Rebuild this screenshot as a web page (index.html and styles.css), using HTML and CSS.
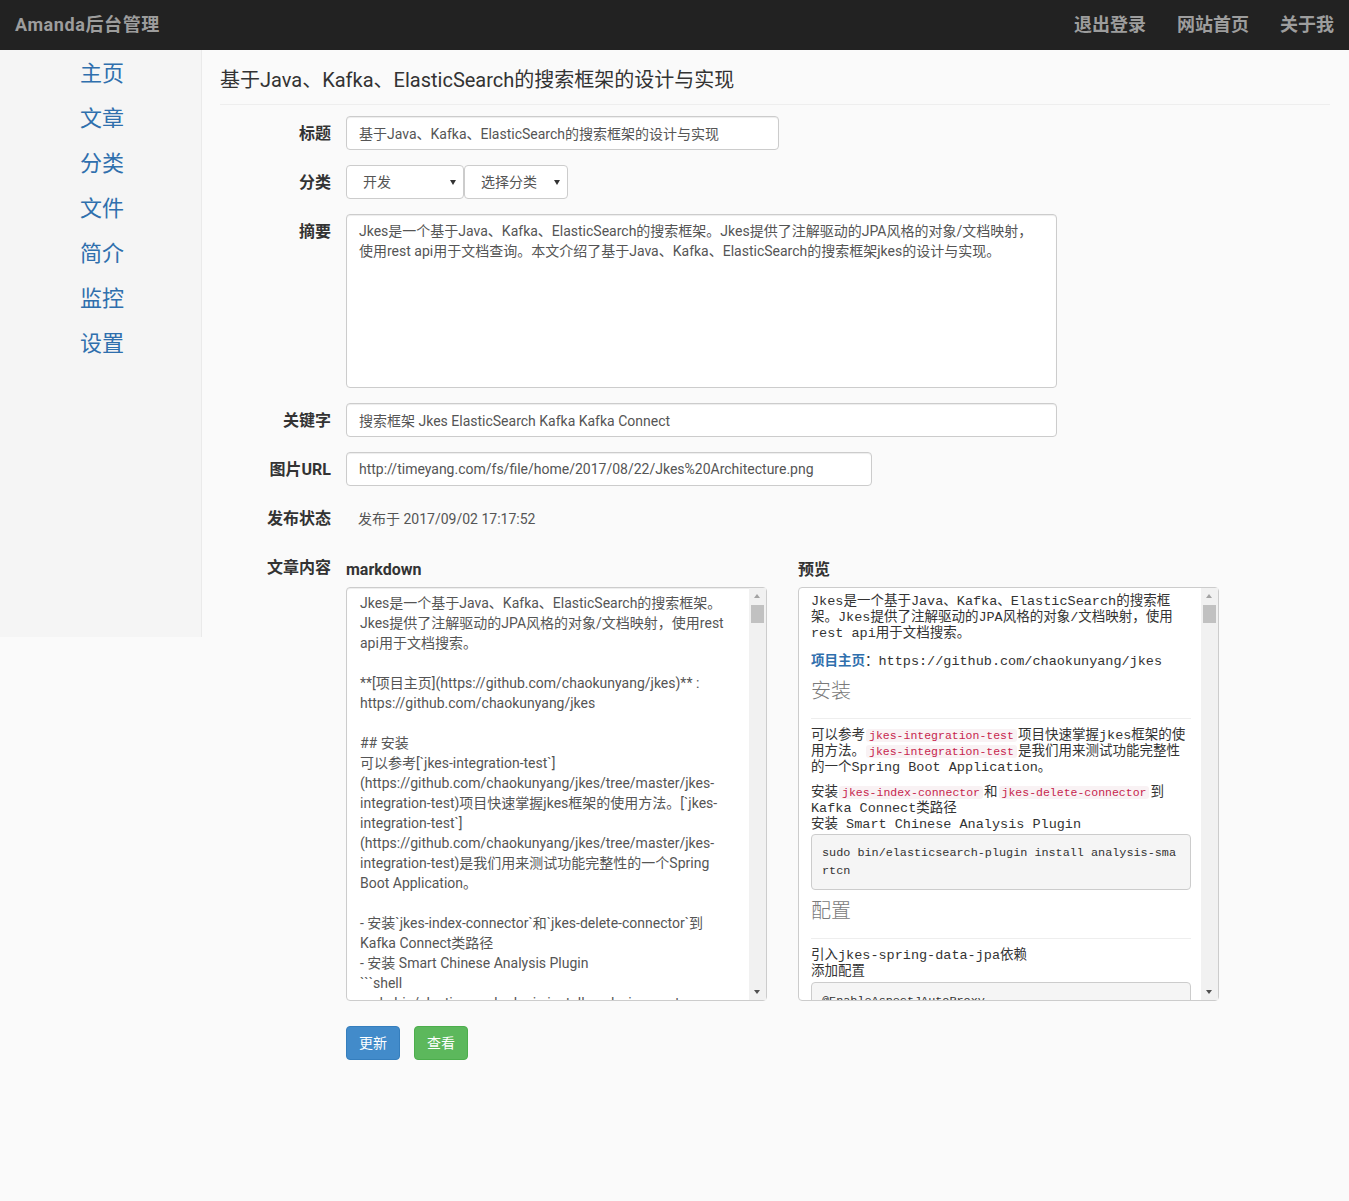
FILE: index.html
```html
<!DOCTYPE html>
<html lang="zh-CN">
<head>
<meta charset="utf-8">
<title>Amanda后台管理</title>
<link rel="stylesheet" href="styles.css">
</head>
<body>
<header class="navbar">
  <div class="brand">Amanda后台管理</div>
  <nav class="nav-links">
    <a href="#">退出登录</a>
    <a href="#">网站首页</a>
    <a href="#">关于我</a>
  </nav>
</header>
<div class="layout">
  <aside class="sidebar">
    <ul>
      <li><a href="#">主页</a></li>
      <li><a href="#">文章</a></li>
      <li><a href="#">分类</a></li>
      <li><a href="#">文件</a></li>
      <li><a href="#">简介</a></li>
      <li><a href="#">监控</a></li>
      <li><a href="#">设置</a></li>
    </ul>
  </aside>
  <main class="main">
    <h1 class="page-title">基于Java、Kafka、ElasticSearch的搜索框架的设计与实现</h1>
    <form class="form">
      <div class="row">
        <label>标题</label>
        <div><input class="input w-title" type="text" value="基于Java、Kafka、ElasticSearch的搜索框架的设计与实现"></div>
      </div>
      <div class="row">
        <label>分类</label>
        <div class="selects">
          <span class="select-wrap"><select class="select s1"><option>开发</option></select></span><span class="select-wrap"><select class="select s2"><option>选择分类</option></select></span>
        </div>
      </div>
      <div class="row">
        <label>摘要</label>
        <div><textarea class="input w-wide summary">Jkes是一个基于Java、Kafka、ElasticSearch的搜索框架。Jkes提供了注解驱动的JPA风格的对象/文档映射，使用rest api用于文档查询。本文介绍了基于Java、Kafka、ElasticSearch的搜索框架jkes的设计与实现。</textarea></div>
      </div>
      <div class="row">
        <label>关键字</label>
        <div><input class="input w-wide" type="text" value="搜索框架 Jkes ElasticSearch Kafka Kafka Connect"></div>
      </div>
      <div class="row">
        <label>图片URL</label>
        <div><input class="input w-url" type="text" value="http://timeyang.com/fs/file/home/2017/08/22/Jkes%20Architecture.png"></div>
      </div>
      <div class="row">
        <label>发布状态</label>
        <div class="status">发布于 2017/09/02 17:17:52</div>
      </div>
      <div class="row">
        <label class="content-label">文章内容</label>
        <div class="editor">
          <div class="col">
            <div class="col-title">markdown</div>
            <div class="box">
            <textarea class="input md">Jkes是一个基于Java、Kafka、ElasticSearch的搜索框架。Jkes提供了注解驱动的JPA风格的对象/文档映射，使用rest api用于文档搜索。

**[项目主页](https://github.com/chaokunyang/jkes)** : https://github.com/chaokunyang/jkes

## 安装
可以参考[&#96;jkes-integration-test&#96;](https://github.com/chaokunyang/jkes/tree/master/jkes-integration-test)项目快速掌握jkes框架的使用方法。[&#96;jkes-integration-test&#96;](https://github.com/chaokunyang/jkes/tree/master/jkes-integration-test)是我们用来测试功能完整性的一个Spring Boot Application。

- 安装&#96;jkes-index-connector&#96;和&#96;jkes-delete-connector&#96;到Kafka Connect类路径
- 安装 Smart Chinese Analysis Plugin
&#96;&#96;&#96;shell
sudo bin/elasticsearch-plugin install analysis-smartcn
&#96;&#96;&#96;

## 配置
引入jkes-spring-data-jpa依赖
添加配置
&#96;&#96;&#96;java
@EnableAspectJAutoProxy
@EnableAsync
@Configuration
public class JkesConfig {
}
&#96;&#96;&#96;</textarea>
            <div class="sb" aria-hidden="true"><div class="sb-up"></div><div class="sb-thumb"></div><div class="sb-down"></div></div>
            </div>
          </div>
          <div class="col">
            <div class="col-title">预览</div>
            <div class="box">
            <div class="preview">
              <p>Jkes是一个基于Java、Kafka、ElasticSearch的搜索框架。Jkes提供了注解驱动的JPA风格的对象/文档映射，使用rest api用于文档搜索。</p>
              <p><strong><a href="#">项目主页</a></strong>：https://github.com/chaokunyang/jkes</p>
              <h2>安装</h2>
              <p>可以参考<code>jkes-integration-test</code>项目快速掌握jkes框架的使用方法。<code>jkes-integration-test</code>是我们用来测试功能完整性的一个Spring Boot Application。</p>
              <p class="tight">安装<code>jkes-index-connector</code>和<code>jkes-delete-connector</code>到Kafka Connect类路径<br>安装 Smart Chinese Analysis Plugin</p>
              <pre>sudo bin/elasticsearch-plugin install analysis-smartcn</pre>
              <h2>配置</h2>
              <p class="tight2">引入jkes-spring-data-jpa依赖<br>添加配置</p>
              <pre>@EnableAspectJAutoProxy
@EnableAsync
@Configuration
public class JkesConfig {
}</pre>
            </div>
            <div class="sb" aria-hidden="true"><div class="sb-up"></div><div class="sb-thumb"></div><div class="sb-down"></div></div>
            </div>
          </div>
        </div>
      </div>
      <div class="row buttons-row">
        <div></div>
        <div class="buttons">
          <button type="button" class="btn btn-primary">更新</button>
          <button type="button" class="btn btn-success">查看</button>
        </div>
      </div>
    </form>
  </main>
</div>
</body>
</html>
```

FILE: styles.css
```css
* { box-sizing: border-box; }
html, body { margin: 0; padding: 0; }
body {
  background: #fafafa;
  font-family: Roboto, "Noto Sans CJK SC", sans-serif;
  color: #333;
  font-size: 14px;
  line-height: 20px;
  min-height: 1201px;
}

.navbar {
  height: 50px;
  background: #222;
  display: flex;
  align-items: center;
  justify-content: space-between;
  padding: 0 15px;
}
.brand {
  color: #9d9d9d;
  font-size: 18px;
  font-weight: bold;
  letter-spacing: 0.6px;
}
.nav-links { display: flex; gap: 31px; }
.nav-links a {
  color: #9d9d9d;
  font-size: 18px;
  font-weight: bold;
  text-decoration: none;
}

.layout { display: flex; align-items: flex-start; }
.sidebar {
  width: 202px;
  height: 587px;
  flex-shrink: 0;
  background: #f5f5f5;
  border-right: 1px solid #eaeaea;
}
.sidebar ul { list-style: none; margin: 0; padding: 1px 0 0 80px; }
.sidebar li { font-size: 22px; line-height: 45px; }
.sidebar a { color: #2f6fad; text-decoration: none; }

.main { flex: 1; padding: 0 19px 0 18px; }
.page-title {
  margin: 19px 0 0;
  padding-bottom: 13px;
  border-bottom: 1px solid #eee;
  font-size: 20px;
  font-weight: normal;
  line-height: 22px;
  color: #333;
}

.form { margin-top: 11px; }
.row {
  display: grid;
  grid-template-columns: 111px 1fr;
  column-gap: 15px;
  margin-bottom: 15px;
}
.row > label {
  text-align: right;
  font-weight: bold;
  font-size: 16px;
  line-height: 20px;
  padding-top: 8px;
  color: #333;
}

.input {
  display: block;
  height: 34px;
  border: 1px solid #ccc;
  border-radius: 4px;
  padding: 6px 12px;
  font-family: inherit;
  font-size: 14px;
  line-height: 20px;
  color: #555;
  background: #fff;
  box-shadow: inset 0 1px 1px rgba(0,0,0,.075);
  outline: none;
}
.w-title { width: 433px; }
.w-wide { width: 711px; }
.w-url { width: 526px; }
.summary { height: 174px; resize: none; }

.selects { display: flex; }
.select-wrap { position: relative; display: inline-block; }
.select-wrap::after {
  content: "";
  position: absolute;
  top: 15px;
  right: 8px;
  border-left: 3.5px solid transparent;
  border-right: 3.5px solid transparent;
  border-top: 5px solid #333;
  pointer-events: none;
}
.select {
  -webkit-appearance: none;
  appearance: none;
  height: 34px;
  border: 1px solid #ccc;
  border-radius: 4px;
  background: #fff;
  font-family: inherit;
  font-size: 14px;
  color: #555;
  padding: 0 20px 0 16px;
  outline: none;
}
.s1 { width: 118px; }
.s2 { width: 104px; }

.status {
  padding: 8px 0 0 12px;
  color: #555;
  font-size: 14px;
  line-height: 20px;
  height: 34px;
}

.row > .content-label { padding-top: 8px; }
.editor {
  display: grid;
  grid-template-columns: 421px 421px;
  column-gap: 31px;
}
.col-title {
  font-size: 16px;
  font-weight: bold;
  line-height: 20px;
  padding-top: 10px;
  margin-bottom: 7px;
  color: #333;
}
.box { position: relative; height: 414px; }
.md {
  width: 421px;
  height: 414px;
  resize: none;
  padding: 5px 29px 6px 13px;
  overflow: hidden;
  white-space: pre-wrap;
}

/* scrollbar drawn over the right edge of each box */
.sb {
  position: absolute;
  top: 1px;
  right: 1px;
  bottom: 1px;
  width: 17px;
  background: #f1f1f1;
  display: flex;
  flex-direction: column;
}
.sb-up, .sb-down { height: 17px; position: relative; flex-shrink: 0; }
.sb-up::after, .sb-down::after {
  content: "";
  position: absolute;
  left: 5px;
  border-left: 3.5px solid transparent;
  border-right: 3.5px solid transparent;
}
.sb-up::after { top: 6px; border-bottom: 4px solid #a3a3a3; }
.sb-down::after { top: 7px; border-top: 4px solid #505050; }
.sb-thumb { height: 18px; margin: 0 2px; background: #c1c1c1; }
.sb-down { margin-top: auto; }

.preview {
  height: 414px;
  overflow: hidden;
  border: 1px solid #ccc;
  border-radius: 4px;
  background: #fff;
  padding: 6px 27px 12px 12px;
  font-family: "Liberation Mono", "Noto Sans CJK SC", monospace;
  font-size: 13.5px;
  line-height: 16px;
  color: #333;
}
.preview p { margin: 0 0 9px; }
.preview p.tight { margin-bottom: 1px; }
.preview p.tight2 { margin-bottom: 2px; }
.preview strong a {
  color: #2f6fad;
  text-decoration: none;
  font-family: "Noto Sans CJK SC", sans-serif;
  font-weight: bold;
}
.preview h2 {
  margin: 0 0 9px;
  font-family: "Noto Sans CJK SC", sans-serif;
  font-weight: 300;
  font-size: 20px;
  line-height: 22px;
  color: #7a7a7a;
  padding-bottom: 17px;
  border-bottom: 1px solid #eee;
}
.preview code {
  font-family: "Liberation Mono", monospace;
  font-size: 11.5px;
  color: #c7254e;
  background: #f9f2f4;
  padding: 0 3px;
  margin: 0 1px;
  border-radius: 3px;
}
.preview pre {
  margin: 0 0 9px;
  background: #f5f5f5;
  border: 1px solid #ccc;
  border-radius: 4px;
  padding: 9px 8px 9px 10px;
  font-family: "Liberation Mono", monospace;
  font-size: 11.8px;
  line-height: 18px;
  color: #333;
  white-space: pre-wrap;
  word-break: break-all;
}

.buttons-row { margin-top: 25px; }
.buttons { display: flex; gap: 14px; }
.btn {
  font-family: inherit;
  font-size: 14px;
  line-height: 20px;
  padding: 6px 12px;
  border-radius: 4px;
  border: 1px solid transparent;
  color: #fff;
  cursor: pointer;
}
.btn-primary { background: #428bca; border-color: #357ebd; }
.btn-success { background: #5cb85c; border-color: #4cae4c; }
```
